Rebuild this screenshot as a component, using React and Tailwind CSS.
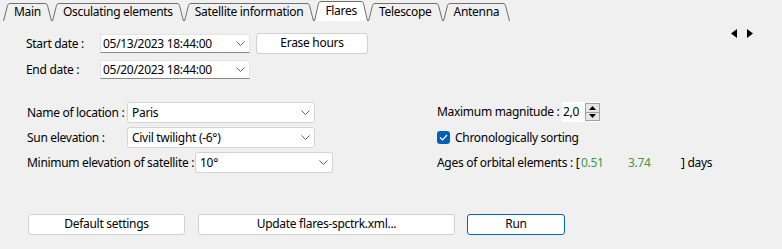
import React from "react";

const tabs = [
  "Main",
  "Osculating elements",
  "Satellite information",
  "Flares",
  "Telescope",
  "Antenna",
];

function Tab({ label, active }) {
  const fill = active ? "#ffffff" : "#f0f0f0";
  const h = active ? 20 : 18;
  return (
    <div className={`flex ${active ? "h-[20px]" : "h-[18px]"}`}>
      <svg width="7" height={h} className="shrink-0">
        <path d={`M0.5 ${h} L4.5 2.5 Q5 0.5 7 0.5 L7 ${h} Z`} fill={fill} />
        <path d={`M0.5 ${h} L4.5 2.5 Q5 0.5 7 0.5`} stroke="#6e6e6e" fill="none" />
      </svg>
      <div
        className={`flex items-center whitespace-nowrap border-t border-[#6e6e6e] px-[4px] pb-[1px] leading-none ${
          active ? "bg-white" : "bg-[#f0f0f0]"
        }`}
      >
        {label}
      </div>
      <svg width="7" height={h} className="shrink-0">
        <path d={`M0 0.5 Q2 0.5 2.5 2.5 L6.5 ${h} L0 ${h} Z`} fill={fill} />
        <path d={`M0 0.5 Q2 0.5 2.5 2.5 L6.5 ${h}`} stroke="#6e6e6e" fill="none" />
      </svg>
    </div>
  );
}

function Chevron() {
  return (
    <svg width="9" height="5" viewBox="0 0 9 5" className="shrink-0">
      <path d="M0.5 0.5 L4.5 4.5 L8.5 0.5" stroke="#606060" fill="none" strokeWidth="1" />
    </svg>
  );
}

function DateBox({ value }) {
  return (
    <div className="flex h-[19px] w-[150px] shrink-0 items-center justify-between border border-[#e3e3e3] border-b-[#8a8a8a] bg-white pl-[2px] pr-[4px]">
      <span className="whitespace-nowrap">{value}</span>
      <Chevron />
    </div>
  );
}

function Combo({ value, width }) {
  return (
    <div
      className={`flex h-[21px] shrink-0 items-center justify-between rounded-[3px] border border-[#d4d4d4] bg-white pl-[4px] pr-[4px] ${width}`}
    >
      <span className="whitespace-nowrap">{value}</span>
      <Chevron />
    </div>
  );
}

function Button({ children, width, primary }) {
  return (
    <button
      className={`flex h-[21px] items-center justify-center whitespace-nowrap rounded-[3px] border bg-white pb-[1px] ${
        primary ? "border-[#0067c0]" : "border-[#d0d0d0]"
      } ${width}`}
    >
      {children}
    </button>
  );
}

export default function App() {
  return (
    <div
      className="h-[249px] w-[782px] overflow-hidden bg-[#f0f0f0] text-[12px] tracking-[-0.3px] text-black"
      style={{ fontFamily: '"Noto Sans", "Open Sans", sans-serif' }}
    >
      {/* tab strip */}
      <div className="flex h-[21px] items-end pl-[3px]">
        {tabs.map((t) => (
          <Tab key={t} label={t} active={t === "Flares"} />
        ))}
      </div>

      <div className="flex flex-col pl-[26px]">
        {/* dates */}
        <div className="mt-[12px] flex h-[21px] items-center">
          <span className="w-[74px] shrink-0 whitespace-nowrap">Start date :</span>
          <DateBox value="05/13/2023 18:44:00" />
          <div className="ml-[6px]">
            <Button width="w-[112px]">Erase hours</Button>
          </div>
          <div className="ml-[363px] -mt-[21px] flex items-center gap-[10px]">
            <svg width="6" height="9" viewBox="0 0 6 9">
              <path d="M6 0 L0 4.5 L6 9 Z" fill="#000" />
            </svg>
            <svg width="6" height="9" viewBox="0 0 6 9">
              <path d="M0 0 L6 4.5 L0 9 Z" fill="#000" />
            </svg>
          </div>
        </div>
        <div className="mt-[6px] flex h-[19px] items-center">
          <span className="w-[74px] shrink-0 whitespace-nowrap">End date :</span>
          <DateBox value="05/20/2023 18:44:00" />
        </div>

        {/* settings */}
        <div className="mt-[23px] flex">
          <div className="flex w-[411px] shrink-0 flex-col pl-[1px]">
            <div className="flex h-[21px] items-center">
              <span className="w-[100px] shrink-0 whitespace-nowrap">Name of location :</span>
              <Combo value="Paris" width="w-[188px]" />
            </div>
            <div className="mt-[4px] flex h-[21px] items-center">
              <span className="w-[100px] shrink-0 whitespace-nowrap">Sun elevation :</span>
              <Combo value="Civil twilight (-6°)" width="w-[188px]" />
            </div>
            <div className="mt-[4px] flex h-[21px] items-center">
              <span className="w-[168px] shrink-0 whitespace-nowrap">
                Minimum elevation of satellite :
              </span>
              <Combo value="10°" width="w-[138px]" />
            </div>
          </div>

          <div className="flex flex-col">
            <div className="flex h-[20px] items-center">
              <span className="w-[125px] shrink-0 whitespace-nowrap">Maximum magnitude :</span>
              <div className="flex h-[20px] w-[38px] items-center bg-white pl-[1px]">
                <span className="flex-1">2,0</span>
                <div className="flex h-[18px] w-[15px] flex-col border border-[#a0a0a0] bg-[#e6e6e6]">
                  <div className="flex flex-1 items-center justify-center border-b border-[#a0a0a0]">
                    <svg width="7" height="4" viewBox="0 0 7 4">
                      <path d="M0 4 L3.5 0 L7 4 Z" fill="#000" />
                    </svg>
                  </div>
                  <div className="flex flex-1 items-center justify-center">
                    <svg width="7" height="4" viewBox="0 0 7 4">
                      <path d="M0 0 L3.5 4 L7 0 Z" fill="#000" />
                    </svg>
                  </div>
                </div>
              </div>
            </div>
            <div className="mt-[9px] flex h-[13px] items-center">
              <div className="flex h-[13px] w-[13px] items-center justify-center rounded-[3px] bg-[#005fb8]">
                <svg width="9" height="7" viewBox="0 0 9 7">
                  <path d="M1 3.5 L3.5 6 L8 1" stroke="#fff" strokeWidth="1.2" fill="none" />
                </svg>
              </div>
              <span className="ml-[5px] whitespace-nowrap">Chronologically sorting</span>
            </div>
            <div className="mt-[12px] flex h-[14px] items-center whitespace-nowrap">
              <span className="w-[144px] shrink-0">Ages of orbital elements : [</span>
              <span className="w-[47px] shrink-0 text-[#3d9a3d]">0.51</span>
              <span className="w-[53px] shrink-0 text-[#3d9a3d]">3.74</span>
              <span>] days</span>
            </div>
          </div>
        </div>

        {/* buttons */}
        <div className="mt-[41px] flex items-center pl-[2px]">
          <Button width="w-[157px]">Default settings</Button>
          <div className="ml-[13px]">
            <Button width="w-[257px]">Update flares-spctrk.xml...</Button>
          </div>
          <div className="ml-[12px]">
            <Button width="w-[98px]" primary>
              Run
            </Button>
          </div>
        </div>
      </div>
    </div>
  );
}
